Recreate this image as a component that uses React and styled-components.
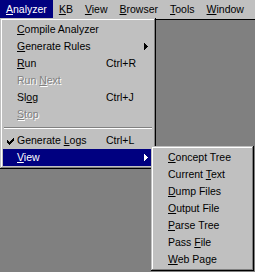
import React from 'react';
import styled, { createGlobalStyle } from 'styled-components';

const GlobalStyle = createGlobalStyle`
  html, body {
    margin: 0;
    padding: 0;
    background: #808080;
  }
  body {
    font-family: "Liberation Sans", Arial, sans-serif;
    font-size: 10.5px;
  }
`;

const Frame = styled.div`
  position: relative;
  width: 255px;
  height: 272px;
  overflow: hidden;
  display: flex;
  flex-direction: column;
  background: #c0c0c0;
`;

const MenuBar = styled.div`
  display: flex;
  height: 19px;
  flex-shrink: 0;
  background: #c0c0c0;
`;

const BarItem = styled.div`
  height: 18px;
  line-height: 18px;
  padding: 0 6px;
  white-space: nowrap;
  color: ${p => (p.$open ? '#fff' : '#000')};
  background: ${p => (p.$open ? '#000080' : 'transparent')};
`;

const Client = styled.div`
  flex: 1;
  background: #808080;
  border-top: 1px solid #000;
`;

const Menu = styled.div`
  position: absolute;
  box-sizing: border-box;
  padding: 3px;
  background: #c0c0c0;
  box-shadow: inset -1px -1px #000, inset 1px 1px #c0c0c0,
    inset -2px -2px #808080, inset 2px 2px #fff;
`;

const MainMenu = styled(Menu)`
  left: 0;
  top: 18px;
  width: 156px;
`;

const SubMenu = styled(Menu)`
  left: 151px;
  top: 146px;
  width: 103px;
`;

const Item = styled.div`
  display: flex;
  align-items: center;
  height: 17px;
  line-height: 17px;
  padding-right: 5px;
  white-space: nowrap;
  background: ${p => (p.$active ? '#000080' : 'transparent')};
  color: ${p => (p.$active ? '#fff' : p.$disabled ? '#808080' : '#000')};
  text-shadow: ${p => (p.$disabled ? '1px 1px 0 #fff' : 'none')};
`;

const CheckCell = styled.span`
  width: 14px;
  height: 17px;
  flex-shrink: 0;
  display: flex;
  align-items: center;
  justify-content: center;
  padding-top: 2px;
  box-sizing: border-box;
`;

const Label = styled.span`
  width: ${p => (p.$wide ? '89px' : 'auto')};
  flex-shrink: 0;
`;

const Shortcut = styled.span``;

const Spacer = styled.span`
  flex: 1;
`;

const Separator = styled.div`
  height: 9px;
  box-sizing: border-box;
  padding: 4px 1px 0;
  &::before {
    content: '';
    display: block;
    border-top: 1px solid #808080;
    border-bottom: 1px solid #fff;
  }
`;

const CheckMark = () => (
  <svg width="7" height="7" viewBox="0 0 7 7" shapeRendering="crispEdges">
    <path
      fill="#000"
      d="M6 0h1v3h-1zM5 1h1v3h-1zM4 2h1v3h-1zM0 2h1v3h-1zM1 3h1v3h-1zM2 4h1v3h-1zM3 3h1v3h-1z"
    />
  </svg>
);

const Arrow = ({ color }) => (
  <svg width="4" height="7" viewBox="0 0 4 7" shapeRendering="crispEdges">
    <path fill={color} d="M0 0h1v7h-1zM1 1h1v5h-1zM2 2h1v3h-1zM3 3h1v1h-1z" />
  </svg>
);

const mnemonic = (text, idx) => (
  <>
    {text.slice(0, idx)}
    <u>{text[idx]}</u>
    {text.slice(idx + 1)}
  </>
);

const barItems = [
  ['Analyzer', 0],
  ['KB', 0],
  ['View', 0],
  ['Browser', 0],
  ['Tools', 0],
  ['Window', 0],
];

const analyzerItems = [
  { label: 'Compile Analyzer', u: 0 },
  { label: 'Generate Rules', u: 0, sub: true },
  { label: 'Run', u: 0, key: 'Ctrl+R' },
  { label: 'Run Next', u: 4, disabled: true },
  { label: 'Slog', u: 2, key: 'Ctrl+J' },
  { label: 'Stop', u: 0, disabled: true },
  { sep: true },
  { label: 'Generate Logs', u: 9, key: 'Ctrl+L', checked: true },
  { label: 'View', u: 0, sub: true, active: true },
];

const viewItems = [
  ['Concept Tree', 0],
  ['Current Text', 8],
  ['Dump Files', 0],
  ['Output File', 0],
  ['Parse Tree', 0],
  ['Pass File', 5],
  ['Web Page', 0],
];

export default function App() {
  return (
    <>
      <GlobalStyle />
      <Frame>
        <MenuBar>
          {barItems.map(([t, u], i) => (
            <BarItem key={t} $open={i === 0}>
              {mnemonic(t, u)}
            </BarItem>
          ))}
        </MenuBar>
        <Client />

        <MainMenu>
          {analyzerItems.map((it, i) =>
            it.sep ? (
              <Separator key={i} />
            ) : (
              <Item key={it.label} $active={it.active} $disabled={it.disabled}>
                <CheckCell>{it.checked && <CheckMark />}</CheckCell>
                <Label $wide>{mnemonic(it.label, it.u)}</Label>
                {it.key && <Shortcut>{it.key}</Shortcut>}
                <Spacer />
                {it.sub && <Arrow color={it.active ? '#fff' : '#000'} />}
              </Item>
            )
          )}
        </MainMenu>

        <SubMenu>
          {viewItems.map(([t, u]) => (
            <Item key={t}>
              <CheckCell />
              <Label>{mnemonic(t, u)}</Label>
            </Item>
          ))}
        </SubMenu>
      </Frame>
    </>
  );
}
